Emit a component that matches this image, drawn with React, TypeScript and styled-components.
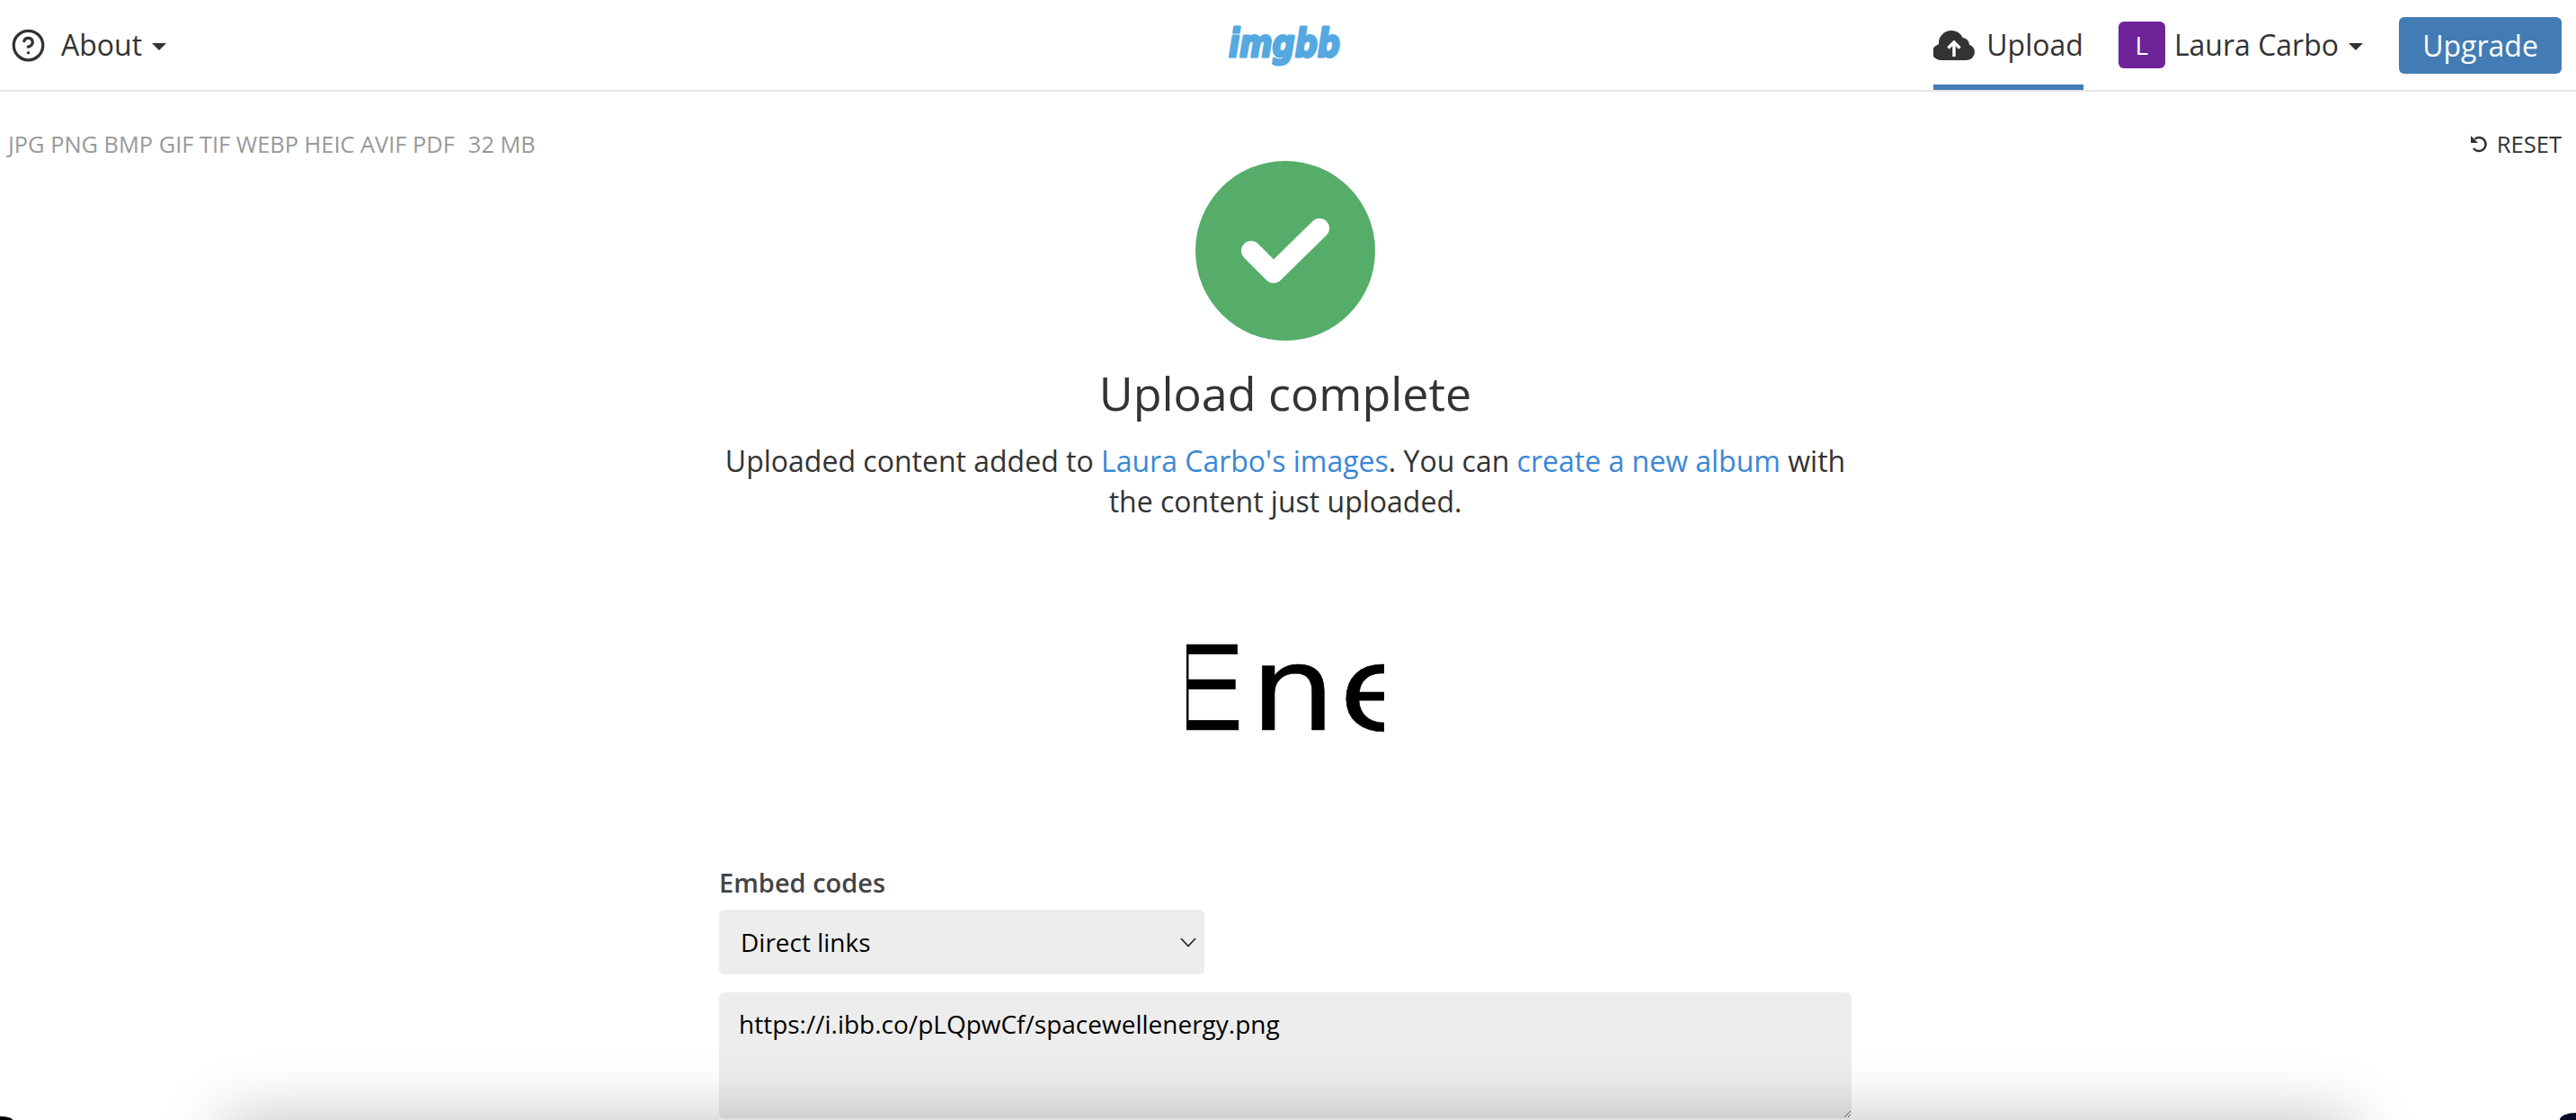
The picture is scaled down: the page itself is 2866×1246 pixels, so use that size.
import { FC } from "react";
import styled, { createGlobalStyle } from "styled-components";
import { CircleHelp } from "lucide-react";

const GlobalStyle = createGlobalStyle`
  html, body {
    margin: 0;
    height: 100%;
    overflow: hidden;
    background: #fff;
  }
  body {
    font-family: "Open Sans", "Liberation Sans", sans-serif;
    color: #333;
  }
  * {
    box-sizing: border-box;
  }
`;

const App: FC = () => {
  return (
    <>
      <GlobalStyle />
      <Header>
        <NavLeft>
          <CircleHelp size={39} strokeWidth={2} />
          <NavText>About</NavText>
          <Caret />
        </NavLeft>
        <Logo viewBox="0 0 130 50" aria-label="imgbb">
          <LogoText x="3" y="35" textLength="124" lengthAdjust="spacingAndGlyphs">
            imgbb
          </LogoText>
        </Logo>
        <NavRight>
          <UploadTab>
            <svg width="46" height="33" viewBox="0 0 46 33">
              <circle cx="20" cy="14" r="14" fill="#333" />
              <circle cx="32" cy="16" r="8" fill="#333" />
              <circle cx="8" cy="24" r="9" fill="#333" />
              <circle cx="37" cy="24" r="9" fill="#333" />
              <rect x="8" y="18" width="29" height="15" fill="#333" />
              <path
                d="M23 29V13M16.500 19.500L23 13l6.500 6.500"
                fill="none"
                stroke="#fff"
                strokeWidth="3.4"
              />
            </svg>
            <NavText>Upload</NavText>
          </UploadTab>
          <UserMenu>
            <Avatar>L</Avatar>
            <NavText>Laura Carbo</NavText>
            <Caret />
          </UserMenu>
          <UpgradeButton>Upgrade</UpgradeButton>
        </NavRight>
      </Header>

      <Toolbar>
        <Formats>
          JPG PNG BMP GIF TIF WEBP HEIC AVIF PDF<SizeLimit>32 MB</SizeLimit>
        </Formats>
        <Reset>
          <svg width="18" height="20" viewBox="0 0 18 20">
            <path
              d="M4.500 4.500A7.500 7.500 0 1 1 3 15"
              fill="none"
              stroke="#333"
              strokeWidth="2.600"
            />
            <path d="M0 1V9H8Z" fill="#333" />
          </svg>
          RESET
        </Reset>
      </Toolbar>

      <Content>
        <Main>
          <SuccessIcon viewBox="0 0 200 200">
            <circle cx="100" cy="100" r="100" fill="#56ad6a" />
            <path
              d="M62 100l25 25 51-50"
              fill="none"
              stroke="#fff"
              strokeWidth="22"
              strokeLinecap="round"
              strokeLinejoin="round"
            />
          </SuccessIcon>
          <Title>Upload complete</Title>
          <Message>
            Uploaded content added to <TextLink>Laura Carbo's images</TextLink>. You can{" "}
            <TextLink>create a new album</TextLink> with the content just uploaded.
          </Message>
          <Preview>
            <PreviewText>Ene</PreviewText>
          </Preview>
          <EmbedForm>
            <FieldLabel>Embed codes</FieldLabel>
            <SelectBox>
              Direct links
              <svg width="18" height="11" viewBox="0 0 18 11">
                <path d="M1 1l8 8.500 8-8.500" fill="none" stroke="#222" strokeWidth="1.700" />
              </svg>
            </SelectBox>
            <CodeArea readOnly value="https://i.ibb.co/pLQpwCf/spacewellenergy.png" />
          </EmbedForm>
        </Main>
      </Content>

      <BottomShadow />
      <CornerLeft />
      <CornerRight />
    </>
  );
};

export default App;

// стили
const Header = styled.header`
  height: 102px;
  border-bottom: 2px solid #e6e6e6;
  padding: 0 16px 0 12px;
  display: grid;
  grid-template-columns: 1fr auto 1fr;
  align-items: center;
`;

const NavLeft = styled.div`
  display: flex;
  align-items: center;
  gap: 17px;
  color: #333;
`;

const NavText = styled.span`
  font-size: 32px;
  line-height: 40px;
  color: #333;
`;

const Caret = styled.i`
  display: block;
  width: 0;
  height: 0;
  margin-left: -6px;
  margin-top: 3px;
  border-left: 8px solid transparent;
  border-right: 8px solid transparent;
  border-top: 8px solid #333;
`;

const Logo = styled.svg`
  width: 130px;
  height: 50px;
  margin-top: 5px;
  margin-right: 5px;
`;

const LogoText = styled.text`
  font-family: "DejaVu Sans", sans-serif;
  font-weight: 700;
  font-style: italic;
  font-size: 42px;
  fill: #55a9e0;
  stroke: #55a9e0;
  stroke-width: 3px;
  stroke-linejoin: round;
`;

const NavRight = styled.nav`
  display: flex;
  justify-content: flex-end;
  align-items: center;
  height: 100px;
`;

const UploadTab = styled.div`
  height: 100px;
  padding-top: 6px;
  display: flex;
  align-items: center;
  gap: 13px;
  border-bottom: 6px solid #437cb5;
  margin-right: 39px;
`;

const UserMenu = styled.div`
  display: flex;
  align-items: center;
  gap: 10px;
  margin-right: 40px;

  ${Caret} {
    margin-left: 1px;
  }
`;

const Avatar = styled.span`
  width: 52px;
  height: 52px;
  border-radius: 6px;
  background: #6f2399;
  color: #fff;
  font-size: 28px;
  display: flex;
  align-items: center;
  justify-content: center;
`;

const UpgradeButton = styled.button`
  width: 181px;
  height: 63px;
  border: 0;
  border-radius: 6px;
  background: #437cb5;
  color: #fff;
  font-family: inherit;
  font-size: 32px;
  padding: 0;
`;

const Toolbar = styled.div`
  height: 36px;
  margin-top: 40px;
  padding: 0 16px 0 9px;
  display: flex;
  align-items: center;
  justify-content: space-between;
  font-size: 25.6px;
`;

const Formats = styled.div`
  color: #999;
  font-size: 25.4px;
`;

const SizeLimit = styled.span`
  margin-left: 15px;
`;

const Reset = styled.div`
  display: flex;
  align-items: center;
  gap: 11px;
  color: #333;
`;

const Content = styled.div`
  padding-right: 6px;
`;

const Main = styled.main`
  width: 1260px;
  margin: 1px auto 0;
  display: flex;
  flex-direction: column;
  align-items: center;
`;

const SuccessIcon = styled.svg`
  width: 200px;
  height: 200px;
  display: block;
`;

const Title = styled.h1`
  margin: 20px 0 15px;
  font-size: 52px;
  line-height: 76px;
  font-weight: 400;
  color: #333;
`;

const Message = styled.p`
  margin: 0;
  font-size: 32px;
  line-height: 45px;
  text-align: center;
  color: #333;
`;

const TextLink = styled.a`
  color: #3a87d6;
`;

const Preview = styled.div`
  width: 220px;
  height: 162px;
  margin: 106px 0 112px;
  overflow: hidden;
  white-space: nowrap;
`;

const PreviewText = styled.span`
  display: inline-block;
  font-family: "DejaVu Sans", sans-serif;
  font-size: 130px;
  line-height: 162px;
  color: #000;
  letter-spacing: 3px;
  -webkit-text-stroke: 0.6px #000;
  transform-origin: left center;
  transform: translateX(-27.6px) scaleX(1.156);
`;

const EmbedForm = styled.form`
  width: 100%;
`;

const FieldLabel = styled.label`
  display: block;
  font-size: 29px;
  line-height: 44px;
  font-weight: 600;
  margin-bottom: 8px;
  color: #444;
`;

const SelectBox = styled.div`
  width: 540px;
  height: 72px;
  border-radius: 6px;
  background: #ededed;
  padding: 0 9px 0 24px;
  display: flex;
  align-items: center;
  justify-content: space-between;
  font-size: 28px;
  color: #000;
`;

const CodeArea = styled.textarea`
  display: block;
  width: 100%;
  height: 140px;
  margin-top: 20px;
  padding: 15px 22px;
  border: 0;
  border-radius: 6px;
  outline: 0;
  background: #ededed;
  font-family: inherit;
  font-size: 28px;
  line-height: 40px;
  color: #000;
  resize: vertical;
`;

const BottomShadow = styled.div`
  position: fixed;
  left: 250px;
  right: 250px;
  bottom: -60px;
  height: 60px;
  box-shadow: 0 0 70px rgba(0, 0, 0, 0.27);
  pointer-events: none;
`;

const CornerLeft = styled.div`
  position: fixed;
  left: 0;
  bottom: 0;
  width: 14px;
  height: 4px;
  background: #000;
  border-top-right-radius: 14px 4px;
`;

const CornerRight = styled.div`
  position: fixed;
  right: 0;
  bottom: 0;
  width: 18px;
  height: 8px;
  background: #0c0a2a;
  border-top-left-radius: 18px 8px;
`;
